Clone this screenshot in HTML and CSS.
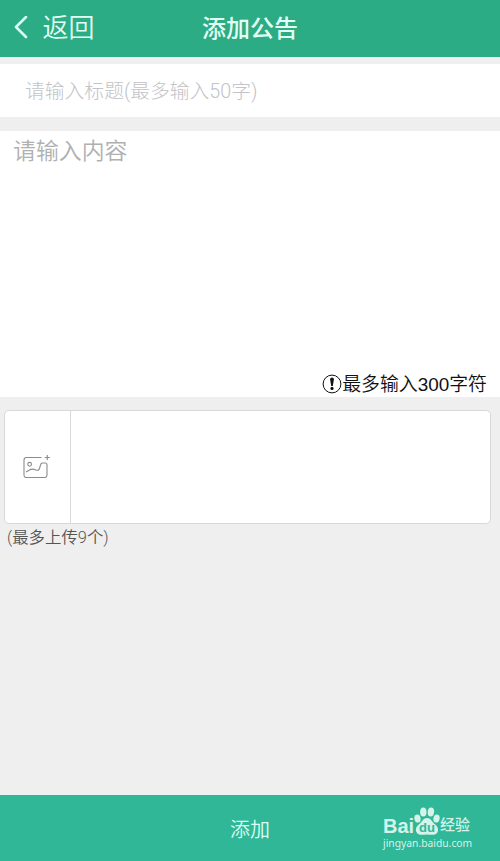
FILE: index.html
```html
<!DOCTYPE html>
<html lang="zh-CN">
<head>
<meta charset="utf-8">
<title>添加公告</title>
<link rel="stylesheet" href="styles.css">
</head>
<body>
<div class="app">
  <header class="header">
    <div class="back">
      <svg class="chevron" width="14" height="24" viewBox="0 0 14 24"><path d="M12 1 2 11 12 21"/></svg>
      <span>返回</span>
    </div>
    <h1 class="title">添加公告</h1>
  </header>
  <div class="subject">请输入标题(最多输入50字)</div>
  <section class="content">
    <div class="content-hint">请输入内容</div>
    <div class="limit">
      <svg width="20" height="20" viewBox="0 0 20 20"><circle cx="10" cy="10" r="8.9" fill="none" stroke="#111"/><path d="M8.1 5.400a1.900 1.900 0 0 1 3.800 0L10.800 12H9.200z" fill="#111"/><circle cx="10" cy="14.4" r="1.600" fill="#111"/></svg>
      <span>最多输入300字符</span>
    </div>
  </section>
  <section class="upload">
    <div class="upload-add">
      <svg width="28" height="26" viewBox="0 0 28 26" fill="none" stroke="#8c8c8c" stroke-width="1.1"><path d="M18.500 3.500H3.500a2.500 2.500 0 0 0-2.500 2.500v15a2.500 2.500 0 0 0 2.500 2.500h18a2.500 2.500 0 0 0 2.500-2.500V11q0-2-2-2h-2.500q-1.500 0-2 2l-1 3.500q-.8 2.500-3.500 1.500c-2.500-1-4.500-1.500-6.500 0L3 18"/><circle cx="6.600" cy="10.300" r="1.900"/><path d="M24.300 1v5M21.800 3.500h5"/></svg>
    </div>
  </section>
  <div class="upload-note">(最多上传9个)</div>
  <footer class="submit">
    <span>添加</span>
    <div class="watermark">
      <div class="brand">
        <span class="brand-latin">Bai</span>
        <svg class="paw" width="26" height="29" viewBox="0 0 26 29"><g fill="#d5f3e9"><ellipse cx="3.500" cy="11.500" rx="3.100" ry="4" transform="rotate(-12 3.500 11.500)"/><ellipse cx="9.300" cy="5" rx="3.200" ry="4.500"/><ellipse cx="16.900" cy="5" rx="3.200" ry="4.500" transform="rotate(8 16.900 5)"/><ellipse cx="22.500" cy="11.500" rx="3.100" ry="4" transform="rotate(12 22.500 11.500)"/><path d="M13 11c3.500 0 4.500 3 7 5.500 3.500 2.500 5 5.500 3.500 8.800-2 3.700-6.500 2.200-10.500 2.200S4.500 29 2.500 25.300C1 22 2.500 19 6 16.500 8.500 14 9.500 11 13 11z"/></g><text class="paw-text" x="13" y="25" text-anchor="middle">du</text></svg>
        <span class="brand-cjk">经验</span>
      </div>
      <div class="site">jingyan.baidu.com</div>
    </div>
  </footer>
</div>
</body>
</html>
```
FILE: styles.css
```css
* { box-sizing: border-box; }
body {
  margin: 0;
  background: #efefef;
  font-family: Roboto, "Noto Sans CJK SC", sans-serif;
  font-weight: 350;
}
.app { height: 861px; display: flex; flex-direction: column; }
.header {
  height: 57px;
  display: grid;
  grid-template-columns: 1fr auto 1fr;
  align-items: center;
  padding-bottom: 2px;
  background: #2bac84;
  color: #e2fff5;
}
.back { display: flex; align-items: center; gap: 15px; padding-left: 13.5px; font-size: 26px; line-height: 38px; }
.chevron { fill: none; stroke: #d5fff0; stroke-width: 2.6; stroke-linecap: round; stroke-linejoin: round; }
.title { margin: 0; padding-top: 2px; font-size: 24px; line-height: 36px; font-weight: 500; }
.subject {
  height: 53px;
  margin-top: 7px;
  padding: 1px 0 0 25px;
  font-size: 19.8px;
  line-height: 53px;
  color: #c3c3c7;
  font-weight: 300;
  background: #fff;
}
.content {
  height: 266px;
  margin-top: 14px;
  padding: 3px 13px 0;
  display: flex;
  flex-direction: column;
  justify-content: space-between;
  background: #fff;
}
.content-hint { font-size: 22.9px; line-height: 36px; color: #b0b0b0; }
.limit { display: flex; justify-content: flex-end; align-items: center; font: 350 18.9px/25px "Liberation Sans", "Noto Sans CJK SC", sans-serif; color: #111; }
.limit span { padding-top: 1px; }
.upload {
  height: 114px;
  margin: 13px 9px 0 4px;
  display: flex;
  border: 1px solid #d8d8d8;
  border-radius: 5px;
  background: #fff;
}
.upload-add { width: 66px; padding-right: 1px; display: flex; align-items: center; justify-content: center; border-right: 1px solid #d8d8d8; }
.upload-note { padding: 1px 0 0 7px; font-size: 16.4px; line-height: 26px; color: #555; }
.submit {
  height: 66px;
  margin-top: auto;
  display: grid;
  grid-template-columns: 1fr auto 1fr;
  align-items: center;
  background: #2fb797;
  color: #dcfff5;
  font-size: 20px;
}
.submit > span { grid-column: 2; }
.watermark { justify-self: end; width: 117px; color: #d5f3e9; }
.brand { height: 29px; display: flex; align-items: flex-end; }
.brand-latin { width: 31px; font: bold 20px/20px "Liberation Sans", sans-serif; }
.paw-text { font: bold 13px "Liberation Sans", sans-serif; fill: #2fb797; }
.brand-cjk { font-size: 15px; line-height: 21px; font-weight: 500; }
.site { font: 400 10.3px/14px "Noto Sans", sans-serif; }
```
